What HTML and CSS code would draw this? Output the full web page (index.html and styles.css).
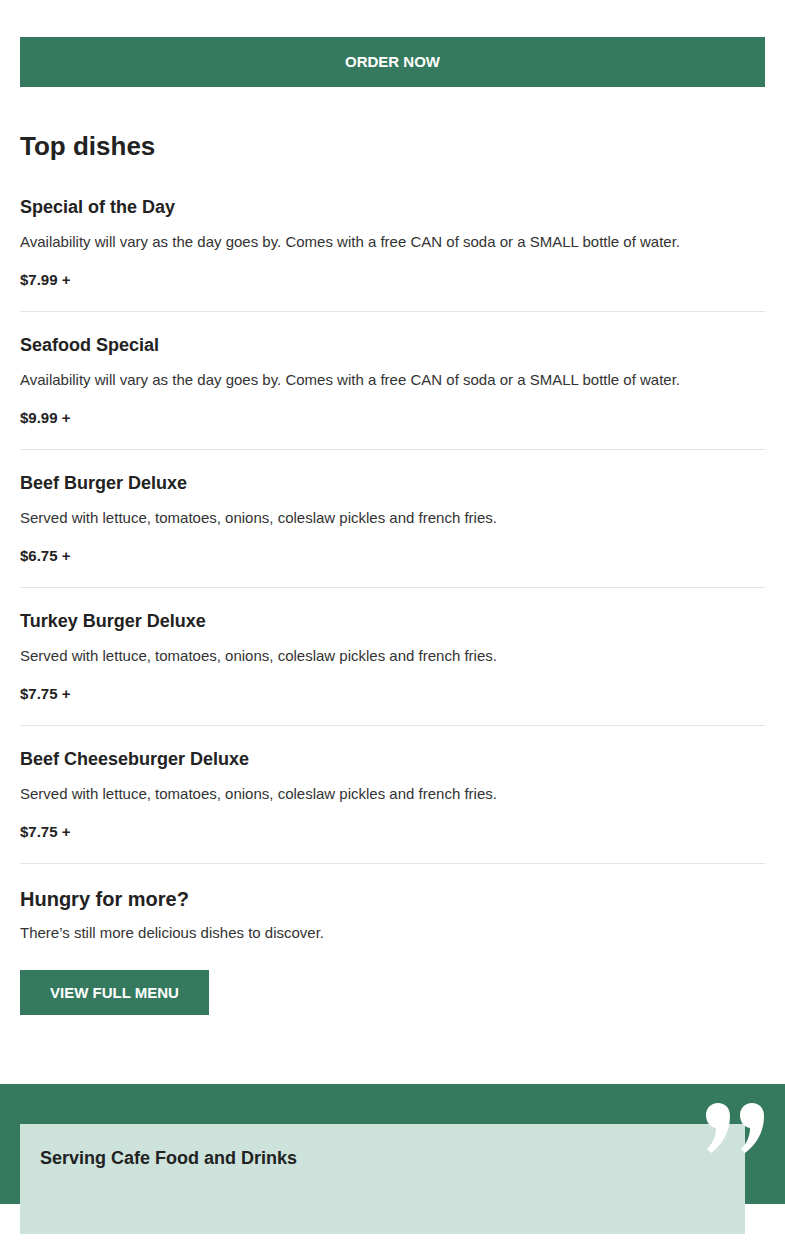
FILE: index.html
```html
<!DOCTYPE html>
<html lang="en">
<head>
<meta charset="utf-8">
<title>Top dishes</title>
<link rel="stylesheet" href="styles.css">
</head>
<body>
<main class="page">
  <div class="container">
    <a class="btn-order" href="#">ORDER NOW</a>

    <h2 class="section-title">Top dishes</h2>

    <ul class="dish-list">
      <li class="dish">
        <h3 class="dish-name">Special of the Day</h3>
        <p class="dish-desc">Availability will vary as the day goes by. Comes with a free CAN of soda or a SMALL bottle of water.</p>
        <p class="dish-price">$7.99 +</p>
      </li>
      <li class="dish">
        <h3 class="dish-name">Seafood Special</h3>
        <p class="dish-desc">Availability will vary as the day goes by. Comes with a free CAN of soda or a SMALL bottle of water.</p>
        <p class="dish-price">$9.99 +</p>
      </li>
      <li class="dish">
        <h3 class="dish-name">Beef Burger Deluxe</h3>
        <p class="dish-desc">Served with lettuce, tomatoes, onions, coleslaw pickles and french fries.</p>
        <p class="dish-price">$6.75 +</p>
      </li>
      <li class="dish">
        <h3 class="dish-name">Turkey Burger Deluxe</h3>
        <p class="dish-desc">Served with lettuce, tomatoes, onions, coleslaw pickles and french fries.</p>
        <p class="dish-price">$7.75 +</p>
      </li>
      <li class="dish">
        <h3 class="dish-name">Beef Cheeseburger Deluxe</h3>
        <p class="dish-desc">Served with lettuce, tomatoes, onions, coleslaw pickles and french fries.</p>
        <p class="dish-price">$7.75 +</p>
      </li>
    </ul>

    <div class="more">
      <h3 class="more-title">Hungry for more?</h3>
      <p class="more-text">There’s still more delicious dishes to discover.</p>
      <a class="btn-menu" href="#">VIEW FULL MENU</a>
    </div>
  </div>

  <section class="testimonial">
    <svg class="quote-mark" viewBox="0 0 60 50" width="60" height="50" aria-hidden="true">
      <path d="M13 0 C20 0 25 5 25 13 C25 29 17 42 6 50 L2 46 C8 40 11 33 11 25 C5 24 1 19 1 12 C1 5 6 0 13 0 Z" fill="#fff"/>
      <path transform="translate(34,0)" d="M13 0 C20 0 25 5 25 13 C25 29 17 42 6 50 L2 46 C8 40 11 33 11 25 C5 24 1 19 1 12 C1 5 6 0 13 0 Z" fill="#fff"/>
    </svg>
    <div class="testimonial-card">
      <h3 class="testimonial-title">Serving Cafe Food and Drinks</h3>
    </div>
  </section>
</main>
</body>
</html>
```

FILE: styles.css
```css
* {
  box-sizing: border-box;
}

html, body {
  margin: 0;
  padding: 0;
  background: #ffffff;
}

body {
  font-family: "Liberation Sans", Arial, sans-serif;
  color: #222222;
}

.container {
  padding: 37px 20px 0 20px;
}

.btn-order {
  display: flex;
  align-items: center;
  justify-content: center;
  height: 50px;
  padding-bottom: 1px;
  background: #357a5e;
  color: #ffffff;
  font-size: 15px;
  font-weight: bold;
  text-decoration: none;
}

.section-title {
  margin: 44px 0 13px 0;
  font-size: 26px;
  line-height: 30px;
  font-weight: bold;
  color: #222222;
}

.dish-list {
  list-style: none;
  margin: 0;
  padding: 0;
}

.dish {
  padding: 22px 0 22px 0;
  border-bottom: 1px solid #e4e4e4;
}

.dish-name {
  margin: 0;
  font-size: 18px;
  line-height: 22px;
  font-weight: bold;
  color: #222222;
}

.dish-desc {
  margin: 15px 0 0 0;
  font-size: 15px;
  line-height: 18px;
  color: #333333;
}

.dish-price {
  margin: 20px 0 0 0;
  font-size: 15px;
  line-height: 18px;
  font-weight: bold;
  color: #222222;
}

.more {
  padding-top: 23px;
}

.more-title {
  margin: 0;
  font-size: 20px;
  line-height: 24px;
  font-weight: bold;
  color: #222222;
}

.more-text {
  margin: 13px 0 0 0;
  font-size: 15px;
  line-height: 18px;
  color: #333333;
}

.btn-menu {
  display: inline-flex;
  align-items: center;
  justify-content: center;
  margin-top: 28px;
  height: 45px;
  padding: 0 30px;
  background: #357a5e;
  color: #ffffff;
  font-size: 15px;
  font-weight: bold;
  text-decoration: none;
}

.testimonial {
  position: relative;
  margin-top: 69px;
  padding: 40px 40px 23px 20px;
  background: linear-gradient(to bottom, #357a5e 0, #357a5e 120px, #ffffff 120px, #ffffff 100%);
}

.quote-mark {
  position: absolute;
  top: 19px;
  right: 20px;
  z-index: 2;
}

.testimonial-card {
  position: relative;
  z-index: 1;
  height: 110px;
  padding: 22px 20px 20px 20px;
  background: #cce2db;
}

.testimonial-title {
  margin: 0;
  font-size: 18px;
  line-height: 24px;
  font-weight: bold;
  color: #222222;
}
```
